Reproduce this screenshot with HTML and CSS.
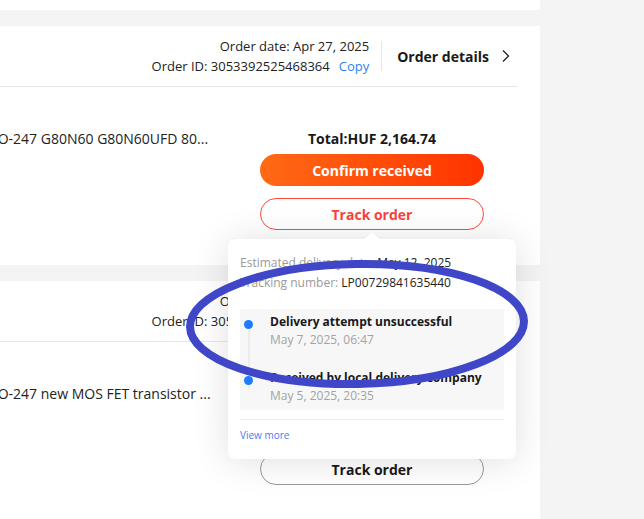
FILE: index.html
```html
<!DOCTYPE html>
<html lang="en">
<head>
<meta charset="utf-8">
<title>Orders</title>
<link rel="stylesheet" href="styles.css">
</head>
<body>
<div class="list">
  <div class="prev-card"></div>

  <section class="card">
    <header class="card-head">
      <div class="meta">
        <div>Order date: Apr 27, 2025</div>
        <div>Order ID: 3053392525468364<span class="copy">Copy</span></div>
      </div>
      <span class="divider"></span>
      <a class="details">Order details
        <svg class="chev" width="16" height="16" viewBox="0 0 16 16"><path d="M5 2.5 10.5 8 5 13.5" fill="none" stroke="#222" stroke-width="1.3"/></svg>
      </a>
    </header>
    <div class="card-body">
      <div class="product">
        <div class="thumb"></div>
        <div class="title">TO-247 G80N60 G80N60UFD 80...</div>
      </div>
      <div class="actions">
        <div class="total">Total:HUF 2,164.74</div>
        <button class="btn btn-primary">Confirm received</button>
        <div class="track-wrap">
          <button class="btn btn-outline-red">Track order</button>
          <div class="popover">
            <div class="pop-line"><span class="label">Estimated delivery date: </span><span class="value">May 12, 2025</span></div>
            <div class="pop-line"><span class="label">Tracking number: </span><span class="value">LP00729841635440</span></div>
            <div class="track-list">
              <div class="track-item">
                <div class="track-title">Delivery attempt unsuccessful</div>
                <div class="track-time">May 7, 2025, 06:47</div>
              </div>
              <div class="track-item">
                <div class="track-title">Received by local delivery company</div>
                <div class="track-time">May 5, 2025, 20:35</div>
              </div>
            </div>
            <div class="pop-foot"><a class="more">View more</a></div>
          </div>
        </div>
      </div>
    </div>
  </section>

  <section class="card">
    <header class="card-head">
      <div class="meta">
        <div>Order date: Apr 27, 2025</div>
        <div>Order ID: 3053392525468364<span class="copy">Copy</span></div>
      </div>
      <span class="divider"></span>
      <a class="details">Order details
        <svg class="chev" width="16" height="16" viewBox="0 0 16 16"><path d="M5 2.5 10.5 8 5 13.5" fill="none" stroke="#222" stroke-width="1.3"/></svg>
      </a>
    </header>
    <div class="card-body">
      <div class="product">
        <div class="thumb"></div>
        <div class="title">TO-247 new MOS FET transistor ...</div>
      </div>
      <div class="actions">
        <div class="total">Total:HUF 1,480.20</div>
        <button class="btn btn-primary">Confirm received</button>
        <div class="track-wrap">
          <button class="btn btn-outline">Track order</button>
        </div>
      </div>
    </div>
  </section>
</div>

<svg class="annotation" width="644" height="519" viewBox="0 0 644 519">
  <ellipse cx="357" cy="324" rx="167" ry="60" transform="rotate(-1 357 324)" fill="none" stroke="#3f47c8" stroke-width="8"/>
</svg>
</body>
</html>
```

FILE: styles.css
```css
* { box-sizing: border-box; }

html, body {
  margin: 0;
  padding: 0;
}

body {
  background: #f4f4f4;
  font-family: "Open Sans", "Noto Sans", Arial, sans-serif;
  color: #191919;
  overflow: hidden;
  width: 644px;
  height: 519px;
  position: relative;
}

.list {
  width: 662px;
  margin-left: -122px;
  display: flex;
  flex-direction: column;
  gap: 16px;
}

.prev-card {
  height: 10px;
  background: #fff;
}

.card {
  background: #fff;
  padding: 0 23px 0 20px;
}

.card-head {
  height: 61px;
  border-bottom: 1px solid #e8e8e8;
  display: flex;
  align-items: center;
  justify-content: flex-end;
  padding-right: 3px;
}

.meta {
  text-align: right;
  font-size: 13px;
  line-height: 20px;
  color: #222;
}

.copy {
  color: #2f7ff5;
  margin-left: 9px;
}

.divider {
  width: 1px;
  height: 30px;
  background: #e6e6e6;
  margin: 0 15px 0 12px;
}

.details {
  display: flex;
  align-items: center;
  font-size: 14px;
  font-weight: 700;
  color: #191919;
}

.chev {
  margin-left: 9px;
}

.card-body {
  display: flex;
  justify-content: space-between;
  align-items: flex-start;
  padding: 42px 33px 35px 0;
}

.product {
  display: flex;
  gap: 12px;
  align-items: flex-start;
}

.thumb {
  width: 80px;
  height: 80px;
  margin-top: -8px;
  background: #eee;
}

.title {
  font-size: 14px;
  line-height: 20px;
  color: #222;
  white-space: nowrap;
}

.actions {
  width: 224px;
  display: flex;
  flex-direction: column;
  align-items: stretch;
}

.total {
  text-align: center;
  font-size: 14px;
  font-weight: 700;
  line-height: 20px;
  margin-bottom: 5px;
}

.btn {
  height: 32px;
  border-radius: 16px;
  font-family: inherit;
  font-size: 14px;
  font-weight: 700;
  width: 100%;
  padding: 0;
  cursor: pointer;
}

.btn-primary {
  border: none;
  color: #fff;
  background: linear-gradient(90deg, #ff6a15, #ff3300);
}

.track-wrap {
  position: relative;
  margin-top: 12px;
}

.btn-outline-red {
  background: #fff;
  border: 1px solid #fd4c3c;
  color: #f9433a;
}

.btn-outline {
  background: #fff;
  border: 1px solid #999;
  color: #191919;
}

.popover {
  position: absolute;
  z-index: 5;
  top: 41px;
  left: -32px;
  width: 288px;
  background: #fff;
  border-radius: 8px;
  box-shadow: 0 2px 36px rgba(0, 0, 0, 0.13);
  padding: 14px 12px 17px;
}

.popover::before {
  content: "";
  position: absolute;
  top: -5px;
  left: 139px;
  width: 10px;
  height: 10px;
  background: #fff;
  transform: rotate(45deg);
}

.pop-line {
  font-size: 12px;
  line-height: 20px;
  position: relative;
}

.label { color: #9a9a9a; }
.value { color: #222; }

.track-list {
  margin-top: 16px;
  background: #f7f7f7;
  padding: 4px 0 5px;
}

.track-item {
  position: relative;
  padding-left: 30px;
}

.track-item + .track-item {
  margin-top: 20px;
}

.track-item::before {
  content: "";
  position: absolute;
  left: 4px;
  top: 7px;
  width: 9px;
  height: 9px;
  border-radius: 50%;
  background: #1f7bff;
  z-index: 1;
}

.track-item:not(:last-child)::after {
  content: "";
  position: absolute;
  left: 7.5px;
  top: 14px;
  width: 2px;
  height: 62px;
  background: #ececec;
}

.track-title {
  font-size: 12px;
  font-weight: 700;
  line-height: 18px;
  color: #191919;
}

.track-time {
  font-size: 12px;
  line-height: 18px;
  color: #a3a3a3;
}

.pop-foot {
  margin-top: 9px;
  border-top: 1px solid #eeeeee;
  padding-top: 6px;
  line-height: 14px;
}

.more {
  font-size: 10px;
  color: #4a7df5;
}

.annotation {
  position: absolute;
  left: 0;
  top: 0;
  z-index: 10;
  pointer-events: none;
}
```
